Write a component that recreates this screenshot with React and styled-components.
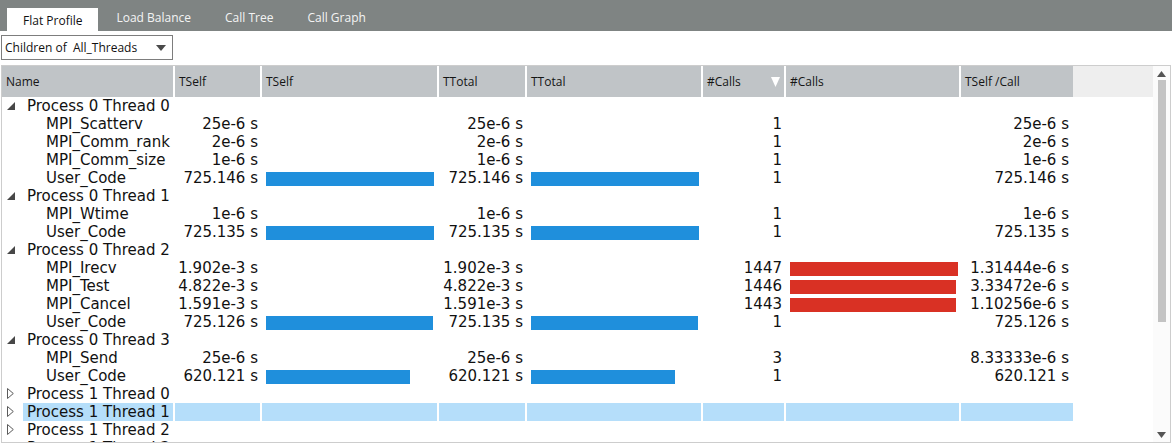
import React from 'react'
import styled, { createGlobalStyle } from 'styled-components'

const GlobalStyle = createGlobalStyle`
  html, body {
    margin: 0;
    padding: 0;
    background: #ffffff;
    overflow: hidden;
  }
`

const COLS = '171px 85px 175px 86px 174px 81px 173px 112px'
const BAR_MAX = 168

const tabs = ['Flat Profile', 'Load Balance', 'Call Tree', 'Call Graph']

const rows = [
  { group: true, label: 'Process 0 Thread 0', open: true },
  { label: 'MPI_Scatterv', tself: '25e-6 s', ttotal: '25e-6 s', calls: '1', per: '25e-6 s' },
  { label: 'MPI_Comm_rank', tself: '2e-6 s', ttotal: '2e-6 s', calls: '1', per: '2e-6 s' },
  { label: 'MPI_Comm_size', tself: '1e-6 s', ttotal: '1e-6 s', calls: '1', per: '1e-6 s' },
  { label: 'User_Code', tself: '725.146 s', selfBar: 1, ttotal: '725.146 s', totalBar: 1, calls: '1', per: '725.146 s' },
  { group: true, label: 'Process 0 Thread 1', open: true },
  { label: 'MPI_Wtime', tself: '1e-6 s', ttotal: '1e-6 s', calls: '1', per: '1e-6 s' },
  { label: 'User_Code', tself: '725.135 s', selfBar: 1, ttotal: '725.135 s', totalBar: 1, calls: '1', per: '725.135 s' },
  { group: true, label: 'Process 0 Thread 2', open: true },
  { label: 'MPI_Irecv', tself: '1.902e-3 s', ttotal: '1.902e-3 s', calls: '1447', callsBar: 1, per: '1.31444e-6 s' },
  { label: 'MPI_Test', tself: '4.822e-3 s', ttotal: '4.822e-3 s', calls: '1446', callsBar: 0.988, per: '3.33472e-6 s' },
  { label: 'MPI_Cancel', tself: '1.591e-3 s', ttotal: '1.591e-3 s', calls: '1443', callsBar: 0.988, per: '1.10256e-6 s' },
  { label: 'User_Code', tself: '725.126 s', selfBar: 0.994, ttotal: '725.135 s', totalBar: 0.994, calls: '1', per: '725.126 s' },
  { group: true, label: 'Process 0 Thread 3', open: true },
  { label: 'MPI_Send', tself: '25e-6 s', ttotal: '25e-6 s', calls: '3', per: '8.33333e-6 s' },
  { label: 'User_Code', tself: '620.121 s', selfBar: 0.855, ttotal: '620.121 s', totalBar: 0.855, calls: '1', per: '620.121 s' },
  { group: true, label: 'Process 1 Thread 0' },
  { group: true, label: 'Process 1 Thread 1', selected: true },
  { group: true, label: 'Process 1 Thread 2' },
  { group: true, label: 'Process 1 Thread 3' },
]

export default function App() {
  return (
    <Page>
      <GlobalStyle />
      <TabBar>
        {tabs.map((t, i) => (
          <Tab key={t} $active={i === 0}>{t}</Tab>
        ))}
      </TabBar>
      <Toolbar>
        <Combo>
          <span>Children of&nbsp; All_Threads</span>
          <svg width="10" height="6" viewBox="0 0 10 6">
            <polygon points="0,0 10,0 5,6" fill="#4a4a4a" />
          </svg>
        </Combo>
      </Toolbar>
      <TableFrame>
        <TableMain>
          <HeaderRow>
            <HeadCell>Name</HeadCell>
            <HeadCell>TSelf</HeadCell>
            <HeadCell>TSelf</HeadCell>
            <HeadCell>TTotal</HeadCell>
            <HeadCell>TTotal</HeadCell>
            <HeadCell>
              <span>#Calls</span>
              <svg width="9" height="10" viewBox="0 0 9 10">
                <polygon points="0,0 9,0 4.5,10" fill="#ffffff" />
              </svg>
            </HeadCell>
            <HeadCell>#Calls</HeadCell>
            <HeadCell>TSelf /Call</HeadCell>
            <HeadFiller />
          </HeaderRow>
          {rows.map((r, i) => (
            <Row key={i}>
              <NameCell $leaf={!r.group}>
                {r.group && (
                  <Toggle>
                    {r.open ? (
                      <svg width="8" height="8" viewBox="0 0 8 8">
                        <polygon points="8,0 8,8 0,8" fill="#474747" />
                      </svg>
                    ) : (
                      <svg width="7" height="11" viewBox="0 0 7 11">
                        <polygon points="0.5,0.5 6.3,5.5 0.5,10.5" fill="none" stroke="#5a5a5a" strokeWidth="1" />
                      </svg>
                    )}
                  </Toggle>
                )}
                <Label $selected={r.selected}>{r.label}</Label>
              </NameCell>
              <NumCell $selected={r.selected}>{r.tself}</NumCell>
              <BarCell $selected={r.selected}>
                {r.selfBar && <Bar $color="#1f8fdc" style={{ width: Math.round(BAR_MAX * r.selfBar) }} />}
              </BarCell>
              <NumCell $selected={r.selected}>{r.ttotal}</NumCell>
              <BarCell $selected={r.selected}>
                {r.totalBar && <Bar $color="#1f8fdc" style={{ width: Math.round(BAR_MAX * r.totalBar) }} />}
              </BarCell>
              <NumCell $selected={r.selected}>{r.calls}</NumCell>
              <BarCell $selected={r.selected}>
                {r.callsBar && <Bar $color="#d93124" style={{ width: Math.round(BAR_MAX * r.callsBar) }} />}
              </BarCell>
              <NumCell $selected={r.selected} $pad={4}>{r.per}</NumCell>
            </Row>
          ))}
        </TableMain>
        <Scrollbar>
          <svg width="9" height="6" viewBox="0 0 9 6">
            <polygon points="4.5,0 9,6 0,6" fill="#555" />
          </svg>
          <Thumb />
          <svg width="9" height="6" viewBox="0 0 9 6">
            <polygon points="0,0 9,0 4.5,6" fill="#555" />
          </svg>
        </Scrollbar>
      </TableFrame>
    </Page>
  )
}

const Page = styled.div`
  width: 1172px;
  height: 444px;
  display: flex;
  flex-direction: column;
  overflow: hidden;
  background: #fff;
`

const TabBar = styled.div`
  height: 31px;
  flex: none;
  background: #7f8483;
  display: flex;
  align-items: flex-end;
  padding-left: 7px;
`

const Tab = styled.div`
  height: 23px;
  padding: 0 16px;
  margin-right: 2px;
  box-sizing: border-box;
  display: flex;
  align-items: center;
  padding-top: ${p => (p.$active ? '1px' : '0')};
  padding-bottom: ${p => (p.$active ? '0' : '5px')};
  font-family: "Open Sans", "Noto Sans", sans-serif;
  font-size: 12px;
  color: ${p => (p.$active ? '#111' : '#f4f4f4')};
  background: ${p => (p.$active ? '#ffffff' : 'transparent')};
`

const Toolbar = styled.div`
  flex: none;
  padding: 4px 0 5px 1px;
`

const Combo = styled.div`
  width: 172px;
  height: 25px;
  box-sizing: border-box;
  border: 1px solid #7d7d7d;
  background: #fff;
  display: flex;
  align-items: center;
  justify-content: space-between;
  padding: 0 6px 0 3px;
  font-family: "Open Sans", "Noto Sans", sans-serif;
  font-size: 12px;
  color: #111;
`

const TableFrame = styled.div`
  flex: 1;
  margin: 0 1px 1px 1px;
  border: 1px solid #cdcdcd;
  display: flex;
  overflow: hidden;
  min-height: 0;
`

const TableMain = styled.div`
  flex: 1;
  min-width: 0;
  overflow: hidden;
`

const HeaderRow = styled.div`
  display: grid;
  grid-template-columns: ${COLS} 1fr;
  column-gap: 2px;
  height: 31px;
  background: #fff;
`

const HeadCell = styled.div`
  background: #c0c4c7;
  display: flex;
  align-items: center;
  justify-content: space-between;
  padding: 0 4px 0 4px;
  font-family: "Open Sans", "Noto Sans", sans-serif;
  font-size: 12px;
  color: #151515;
  white-space: nowrap;
  overflow: hidden;
`

const HeadFiller = styled.div`
  background: #eeeeee;
  margin-left: -2px;
`

const Row = styled.div`
  display: grid;
  grid-template-columns: ${COLS};
  column-gap: 2px;
  height: 18px;
  font-family: "DejaVu Sans", "Liberation Sans", sans-serif;
  font-size: 15px;
  line-height: 18px;
  color: #111;
  white-space: nowrap;
`

const NameCell = styled.div`
  display: flex;
  align-items: stretch;
  padding-left: ${p => (p.$leaf ? '40px' : '4px')};
`

const Toggle = styled.span`
  width: 17px;
  flex: none;
  display: flex;
  align-items: center;
  padding-left: 1px;
  box-sizing: border-box;
  padding-bottom: 1px;
`

const Label = styled.span`
  flex: 1;
  padding-left: 4px;
  background: ${p => (p.$selected ? '#b5defa' : 'transparent')};
`

const NumCell = styled.div`
  text-align: right;
  padding-right: ${p => p.$pad || 2}px;
  background: ${p => (p.$selected ? '#b5defa' : 'transparent')};
`

const BarCell = styled.div`
  padding: 3px 0 0 4px;
  background: ${p => (p.$selected ? '#b5defa' : 'transparent')};
`

const Bar = styled.div`
  height: 14px;
  background: ${p => p.$color};
`

const Scrollbar = styled.div`
  width: 17px;
  flex: none;
  background: #fbfbfb;
  display: flex;
  flex-direction: column;
  align-items: center;
  padding: 5px 0 4px;
  box-sizing: border-box;
  gap: 3px;
`

const Thumb = styled.div`
  width: 8px;
  height: 242px;
  background: #c3c3c3;
  margin-bottom: auto;
`
